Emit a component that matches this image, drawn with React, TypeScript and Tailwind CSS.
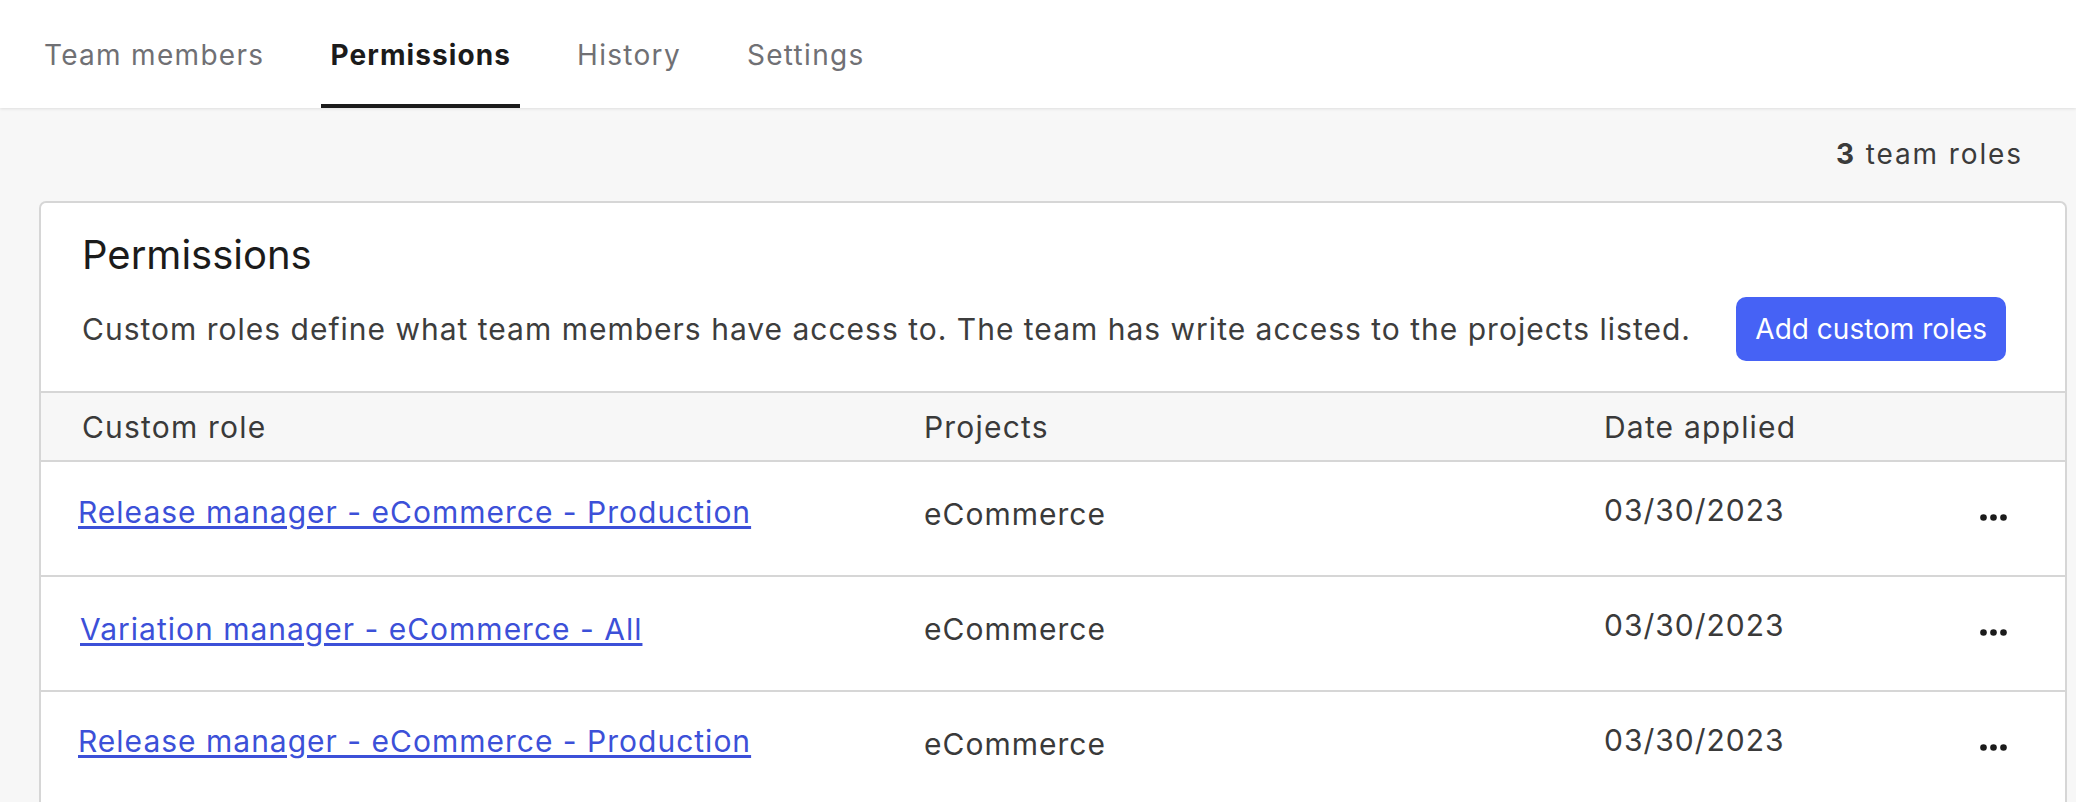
const tabs = [
  { label: 'Team members', active: false },
  { label: 'Permissions', active: true },
  { label: 'History', active: false },
  { label: 'Settings', active: false },
];

const roles = [
  { name: 'Release manager - eCommerce - Production', project: 'eCommerce', date: '03/30/2023', linkClass: 'pt-[32px] -ml-[4px]' },
  { name: 'Variation manager - eCommerce - All', project: 'eCommerce', date: '03/30/2023', linkClass: 'pt-[34px] -ml-[2px]' },
  { name: 'Release manager - eCommerce - Production', project: 'eCommerce', date: '03/30/2023', linkClass: 'pt-[31px] -ml-[4px]' },
];

function Dots() {
  return (
    <svg width="27" height="7" viewBox="0 0 27 7" className="text-[#1b1b1b]">
      <circle cx="3.5" cy="3.5" r="3.3" fill="currentColor" />
      <circle cx="13.5" cy="3.5" r="3.3" fill="currentColor" />
      <circle cx="23.5" cy="3.5" r="3.3" fill="currentColor" />
    </svg>
  );
}

export default function App() {
  return (
    <div className="h-[802px] w-full overflow-hidden bg-[#f7f7f7] font-['Inter',sans-serif] antialiased">
      {/* Tabs */}
      <nav className="relative z-10 flex h-[108px] gap-[48px] bg-white pl-[35px] shadow-[0_1px_3px_rgba(0,0,0,0.10)]">
        {tabs.map((tab) => (
          <div
            key={tab.label}
            className={`flex h-full items-center border-b-4 px-[9px] pt-[6px] text-[28px] leading-[34px] ${
              tab.active
                ? 'border-[#1b1b1b] font-bold tracking-[1.1px] text-[#1b1b1b]'
                : 'border-transparent tracking-[1.3px] text-[#707074]'
            }`}
          >
            {tab.label}
          </div>
        ))}
      </nav>

      <div className="pl-[39px] pr-[9px] pt-[29px]">
        <p className="mb-[30px] pr-[44px] text-right text-[28px] leading-[34px] tracking-[1.9px] text-[#3b3b3b]">
          <span className="font-bold">3</span> team roles
        </p>

        {/* Card */}
        <div className="rounded-t-[7px] border-2 border-b-0 border-[#d6d6d6] bg-white">
          <div className="pl-[41px] pr-[59px] pt-[28px] pb-[30px]">
            <h2 className="text-[40px] leading-[48px] text-[#1b1b1b]">Permissions</h2>
            <div className="mt-[18px] flex h-[64px] items-center justify-between">
              <p className="text-[30px] leading-[36px] tracking-[1px] text-[#3d3d3d]">
                Custom roles define what team members have access to. The team has write access to the projects listed.
              </p>
              <button className="h-[64px] rounded-[10px] bg-[#4662f5] px-[19px] text-[28px] leading-[34px] text-white">
                Add custom roles
              </button>
            </div>
          </div>

          {/* Table header */}
          <div className="flex h-[71px] items-center border-y-2 border-[#d6d6d6] bg-[#f7f7f7] text-[30px] leading-[36px] tracking-[1.2px] text-[#3a3a3a]">
            <div className="w-[883px] pl-[41px]">Custom role</div>
            <div className="w-[680px]">Projects</div>
            <div className="flex-1">Date applied</div>
          </div>

          {/* Rows */}
          {roles.map((role, i) => (
            <div
              key={i}
              className="flex h-[115px] items-start border-b-2 border-[#d6d6d6] text-[30px] leading-[36px] tracking-[1px] text-[#3a3a3a]"
            >
              <div className="w-[883px] pl-[41px]">
                <a
                  href="#"
                  className={`inline-block text-[#3c50d8] underline decoration-[2.5px] underline-offset-[3px] ${role.linkClass}`}
                >
                  {role.name}
                </a>
              </div>
              <div className="w-[680px] pt-[34px]">{role.project}</div>
              <div className="flex flex-1 justify-between pr-[58px]">
                <span className="pt-[30px]">{role.date}</span>
                <span className="pt-[52px]">
                  <Dots />
                </span>
              </div>
            </div>
          ))}
        </div>
      </div>
    </div>
  );
}
